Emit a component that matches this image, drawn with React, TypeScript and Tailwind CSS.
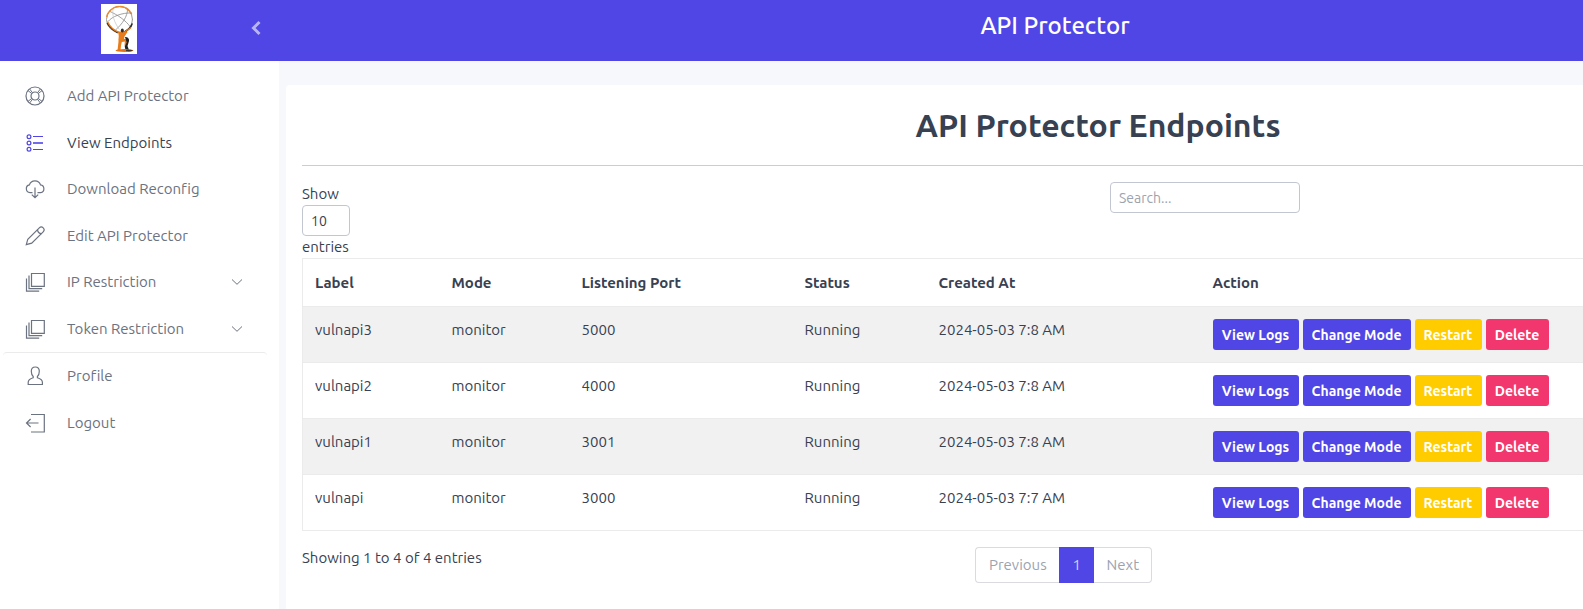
import React from "react";

type IconProps = { children: React.ReactNode; className?: string };

function Icon({ children, className = "" }: IconProps) {
  return (
    <svg
      viewBox="0 0 20 20"
      className={`size-5 shrink-0 ${className}`}
      fill="none"
      stroke="currentColor"
      strokeWidth="1.2"
      aria-hidden="true"
    >
      {children}
    </svg>
  );
}

const icons = {
  help: (
    <Icon>
      <circle cx="10" cy="10" r="9" />
      <circle cx="10" cy="10" r="4" />
      <path
        d="M3 4.600l3.800 3M4.600 3l3 3.800M17 4.600l-3.800 3M15.400 3l-3 3.800M3 15.400l3.800-3M4.600 17l3-3.800M17 15.400l-3.800-3M15.400 17l-3-3.800"
        strokeWidth="1"
      />
    </Icon>
  ),
  list: (
    <Icon className="text-[#4f46e5]">
      <circle cx="4" cy="3.8" r="1.9" />
      <circle cx="4" cy="10" r="1.9" />
      <circle cx="4" cy="16.2" r="1.9" />
      <path d="M8 3.5h10M8 16.5h10" strokeWidth="1" />
      <path d="M8 10h10" strokeWidth="1.6" />
    </Icon>
  ),
  cloud: (
    <Icon>
      <path d="M7.500 13.600H5a3.900 3.900 0 0 1-.6-7.700A5.800 5.800 0 0 1 15.500 5.900a3.900 3.900 0 0 1 .2 7.700H12.500" />
      <path d="M10 8.500v10M6.800 15.600l3.200 3 3.200-3" />
    </Icon>
  ),
  pencil: (
    <Icon>
      <path d="M1.300 18.700l1.500-5.500L14.300 1.900a2.700 2.700 0 0 1 3.900 3.900L6.700 17.200z" />
      <path d="M12.500 3.600c.2 2.400 1.700 3.900 4 4" />
    </Icon>
  ),
  stack: (
    <Icon>
      <path d="M6.500 1.500h12.800v12.800H6.500z" />
      <path d="M4 3.500v13.200h13.200M1.500 6.500v12.700h12.700" />
    </Icon>
  ),
  user: (
    <Icon>
      <path d="M10.300 1c-2.600 0-4 1.800-4 4.300 0 2 .6 4 1.900 5.200v1.300c-3 .9-5 1.700-5 4.500v2.200h14.200v-2.200c0-2.800-2-3.600-5-4.500v-1.300c1.300-1.200 1.900-3.200 1.900-5.200 0-2.500-1.400-4.300-4-4.300z" />
    </Icon>
  ),
  exit: (
    <Icon>
      <path d="M6 1.500h13.300v17.500H6" />
      <path d="M13.500 10H1.500M5.600 6L1.500 10l4.100 4" />
    </Icon>
  ),
};

function Logo() {
  return (
    <svg viewBox="0 0 36 50" className="h-[50px] w-9" role="img" aria-label="Atlas logo">
      <rect width="36" height="50" fill="#fff" />
      <g fill="none" strokeLinecap="round">
        <circle cx="18.500" cy="15.500" r="13" stroke="#9a9a9a" strokeWidth="1" />
        <path d="M5.800 12.500C7.500 6 13 2.500 19 2.500c5 0 9.500 3 11.500 7.500" stroke="#e98a35" strokeWidth="1.500" strokeDasharray="5 1" />
        <path
          d="M7 17.500c4-5 14-9 23-8.500M9 7.500c7 3 16 9 20 15M26.500 6c0 6-5 14-12 20"
          stroke="#8a8a8a"
          strokeWidth=".8"
        />
        <path d="M12 5c-1 6 1 13 6 20" stroke="#c4c4c4" strokeWidth=".7" />
        <path d="M6.500 19.500c2 4 5.500 6.500 10 9M31 20c-1 3.500-4 6-7.500 8" stroke="#2a2a2a" strokeWidth="1.600" />
        <path d="M7 18.500c2 4.500 6.500 8 11 10M29.500 24l-6 4" stroke="#e87b1a" strokeWidth="1.400" />
      </g>
      <path d="M17 27.500l9.500.5-3 4.500-.5 2.500c3-.5 4.500 1 3.500 3l-1 3-2 1 .3-4.500-3 .5-.8 3.500-.5 5h-3l1-9c-.3-3 .7-4.500 0-7.500z" fill="#e87b1a" />
      <path d="M24 33c2.500 0 4.500 1.500 4 4l-1.500 5 1.500 4h-3.500l-.8-3.500 2-4z" fill="#222" />
      <ellipse cx="21.300" cy="26.500" rx="1.500" ry="2" fill="#332a22" />
      <ellipse cx="23.500" cy="46.500" rx="9" ry="1.500" fill="#e27417" />
      <path d="M25 46c2-.6 6-.4 7 .5-1 .8-4.500 1.200-7 .8z" fill="#473522" />
    </svg>
  );
}

type NavEntry = { label: string; icon: React.ReactNode; active?: boolean; expandable?: boolean };

const mainNav: NavEntry[] = [
  { label: "Add API Protector", icon: icons.help },
  { label: "View Endpoints", icon: icons.list, active: true },
  { label: "Download Reconfig", icon: icons.cloud },
  { label: "Edit API Protector", icon: icons.pencil },
  { label: "IP Restriction", icon: icons.stack, expandable: true },
  { label: "Token Restriction", icon: icons.stack, expandable: true },
];

const accountNav: NavEntry[] = [
  { label: "Profile", icon: icons.user },
  { label: "Logout", icon: icons.exit },
];

function NavList({ entries, className }: { entries: NavEntry[]; className: string }) {
  return (
    <ul className={`grid auto-rows-fr ${className}`}>
      {entries.map((entry) => (
        <li key={entry.label} className="flex">
          <a
            href="#"
            className={`flex flex-1 items-center pr-6 pl-[22px] ${
              entry.active ? "text-[#374151]" : "text-[#6b7280]"
            }`}
          >
            {entry.icon}
            <span className="ml-[22px] flex-1">{entry.label}</span>
            {entry.expandable && (
              <svg viewBox="0 0 12 8" className="h-2 w-3" fill="none" stroke="currentColor" aria-hidden="true">
                <path d="M1 1.500l5 4.800 5-4.800" />
              </svg>
            )}
          </a>
        </li>
      ))}
    </ul>
  );
}

type Endpoint = { label: string; mode: string; port: number; status: string; created: string };

const endpoints: Endpoint[] = [
  { label: "vulnapi3", mode: "monitor", port: 5000, status: "Running", created: "2024-05-03 7:8 AM" },
  { label: "vulnapi2", mode: "monitor", port: 4000, status: "Running", created: "2024-05-03 7:8 AM" },
  { label: "vulnapi1", mode: "monitor", port: 3001, status: "Running", created: "2024-05-03 7:8 AM" },
  { label: "vulnapi", mode: "monitor", port: 3000, status: "Running", created: "2024-05-03 7:7 AM" },
];

const columns = [
  { title: "Label", width: "w-[137px]" },
  { title: "Mode", width: "w-[130px]" },
  { title: "Listening Port", width: "w-[223px]" },
  { title: "Status", width: "w-[134px]" },
  { title: "Created At", width: "w-[274px]" },
  { title: "Action", width: "" },
];

const actions = [
  { label: "View Logs", style: "w-[86px] bg-[#4f46e5]" },
  { label: "Change Mode", style: "w-[108px] bg-[#4f46e5]" },
  { label: "Restart", style: "w-[67px] bg-[#ffcc00]" },
  { label: "Delete", style: "w-[63px] bg-[#f1376d]" },
];

function EndpointTable() {
  return (
    <table className="w-full table-fixed border-collapse border border-[#ebebeb] text-left">
      <thead>
        <tr>
          {columns.map((column) => (
            <th key={column.title} scope="col" className={`h-12 px-3 font-bold ${column.width}`}>
              {column.title}
            </th>
          ))}
        </tr>
      </thead>
      <tbody>
        {endpoints.map((row) => (
          <tr key={row.label} className="border-t border-[#ebebeb] align-top odd:bg-[#f1f1f1]">
            <td className="p-3">{row.label}</td>
            <td className="p-3">{row.mode}</td>
            <td className="p-3">{row.port}</td>
            <td className="p-3">{row.status}</td>
            <td className="p-3">{row.created}</td>
            <td className="p-3">
              <div className="flex gap-1">
                {actions.map((action) => (
                  <button
                    key={action.label}
                    type="button"
                    className={`h-[31px] rounded-[3px] text-center text-sm font-bold whitespace-nowrap text-white ${action.style}`}
                  >
                    {action.label}
                  </button>
                ))}
              </div>
            </td>
          </tr>
        ))}
      </tbody>
    </table>
  );
}

export default function App() {
  return (
    <div className="flex min-h-screen flex-col overflow-hidden bg-[#f7f8fb] font-['Ubuntu','Noto_Sans',sans-serif] text-[15px] leading-[22px] text-[#374151] [font-variant-ligatures:none]">
      <header className="z-10 flex h-[61px] bg-[#4f46e5]">
        <div className="flex w-[279px] shrink-0 items-start justify-between pt-1 pr-[18px] pl-[101px]">
          <a href="#">
            <Logo />
          </a>
          <button type="button" aria-label="Collapse sidebar" className="mt-4 text-[#b9b5f5]">
            <svg viewBox="0 0 10 16" className="h-4 w-2.5" fill="none" stroke="currentColor" strokeWidth="3">
              <path d="M8.500 2L2.500 8l6 6" />
            </svg>
          </button>
        </div>
        <div className="min-w-[1552px] flex-1 pt-2.5 text-center text-2xl leading-8 font-medium text-white">
          API Protector
        </div>
      </header>

      <div className="flex flex-1">
        <nav aria-label="Main" className="w-[279px] shrink-0 bg-white pt-3 pr-3 pl-[3px]">
          <NavList entries={mainNav} className="h-[279px]" />
          <div className="rounded-t border-t border-[#ebebeb]">
            <NavList entries={accountNav} className="h-[93px]" />
          </div>
        </nav>

        <main className="flex min-w-[1631px] flex-1 flex-col pt-6 pl-[7px]">
          <section className="flex-1 rounded-t bg-white px-4 pt-5">
            <h1 className="text-center text-[32px] leading-[40px] font-bold">API Protector Endpoints</h1>
            <hr className="mt-5 border-[#cdcdcf]" />

            <div className="mt-4 grid grid-cols-12 gap-x-6">
              <label className="col-span-6 flex w-12 flex-col">
                <span className="leading-[23px]">Show</span>
                <select
                  defaultValue="10"
                  className="h-[31px] w-12 appearance-none rounded border border-[#c2c6d0] bg-white px-2 text-sm"
                >
                  <option>10</option>
                  <option>25</option>
                  <option>50</option>
                </select>
                <span>entries</span>
              </label>
              <div className="col-span-6">
                <input
                  type="search"
                  aria-label="Search endpoints"
                  placeholder="Search..."
                  className="h-[31px] w-[190px] rounded border border-[#c2c6d0] px-2 text-sm placeholder:text-[#9ca3af]"
                />
              </div>
            </div>

            <EndpointTable />

            <div className="mt-4 grid grid-cols-12 gap-x-6">
              <p className="col-span-5">Showing 1 to 4 of 4 entries</p>
              <nav aria-label="Pagination" className="col-span-7 flex h-9 text-[#9ca3af]">
                <button type="button" className="w-[84px] rounded-l border border-r-0 border-[#d9dbde]">
                  Previous
                </button>
                <button type="button" aria-current="page" className="w-[35px] bg-[#4f46e5] text-[#d5d2fa]">
                  1
                </button>
                <button type="button" className="w-[58px] rounded-r border border-l-0 border-[#d9dbde]">
                  Next
                </button>
              </nav>
            </div>
          </section>
        </main>
      </div>
    </div>
  );
}
